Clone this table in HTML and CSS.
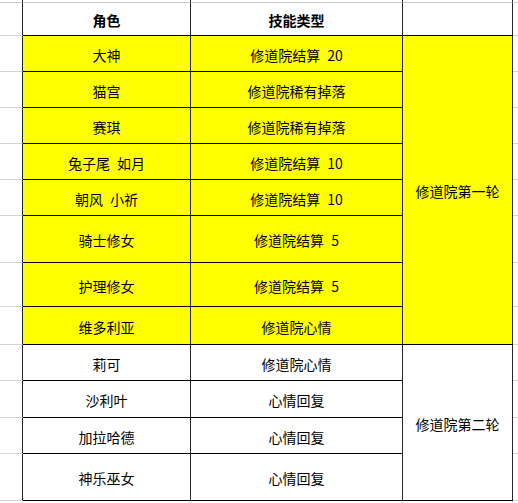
FILE: index.html
```html
<!DOCTYPE html>
<html lang="zh-CN">
<head>
<meta charset="utf-8">
<title>修道院技能</title>
<link rel="stylesheet" href="styles.css">
</head>
<body>
<div class="sheet">
  <!-- top strip -->
  <div class="cell gl top"></div>
  <div class="cell col top"></div>
  <div class="cell col top"></div>
  <div class="cell col top"></div>
  <div class="cell gr"></div>

  <!-- header -->
  <div class="cell gl"></div>
  <div class="cell col head">角色</div>
  <div class="cell col head">技能类型</div>
  <div class="cell col head"></div>
  <div class="cell gr"></div>

  <div class="cell gl"></div>
  <div class="cell col yellow">大神</div>
  <div class="cell col yellow">修道院结算 20</div>
  <div class="cell col yellow span8">修道院第一轮</div>
  <div class="cell gr"></div>

  <div class="cell gl"></div>
  <div class="cell col yellow">猫宫</div>
  <div class="cell col yellow">修道院稀有掉落</div>
  <div class="cell gr"></div>

  <div class="cell gl"></div>
  <div class="cell col yellow">赛琪</div>
  <div class="cell col yellow">修道院稀有掉落</div>
  <div class="cell gr"></div>

  <div class="cell gl"></div>
  <div class="cell col yellow">兔子尾 如月</div>
  <div class="cell col yellow">修道院结算 10</div>
  <div class="cell gr"></div>

  <div class="cell gl"></div>
  <div class="cell col yellow">朝风 小祈</div>
  <div class="cell col yellow">修道院结算 10</div>
  <div class="cell gr"></div>

  <div class="cell gl"></div>
  <div class="cell col yellow">骑士修女</div>
  <div class="cell col yellow">修道院结算 5</div>
  <div class="cell gr"></div>

  <div class="cell gl"></div>
  <div class="cell col yellow">护理修女</div>
  <div class="cell col yellow">修道院结算 5</div>
  <div class="cell gr"></div>

  <div class="cell gl"></div>
  <div class="cell col yellow">维多利亚</div>
  <div class="cell col yellow">修道院心情</div>
  <div class="cell gr"></div>

  <div class="cell gl"></div>
  <div class="cell col">莉可</div>
  <div class="cell col">修道院心情</div>
  <div class="cell col span4">修道院第二轮</div>
  <div class="cell gr"></div>

  <div class="cell gl"></div>
  <div class="cell col">沙利叶</div>
  <div class="cell col">心情回复</div>
  <div class="cell gr"></div>

  <div class="cell gl"></div>
  <div class="cell col">加拉哈德</div>
  <div class="cell col">心情回复</div>
  <div class="cell gr"></div>

  <div class="cell gl"></div>
  <div class="cell col">神乐巫女</div>
  <div class="cell col">心情回复</div>
  <div class="cell gr"></div>

  <!-- bottom strip -->
  <div class="cell gl bottom"></div>
  <div class="cell col bottom"></div>
  <div class="cell col bottom"></div>
  <div class="cell col bottom"></div>
  <div class="cell gr bottom"></div>
</div>
</body>
</html>
```
FILE: styles.css
```css
* {
  box-sizing: border-box;
}

html, body {
  margin: 0;
  padding: 0;
  background: #ffffff;
}

body {
  font-family: "Noto Sans CJK SC", "Noto Sans", sans-serif;
  font-size: 14px;
  color: #000000;
}

.sheet {
  display: grid;
  grid-template-columns: 23px 168px 212px 110px 5px;
  grid-template-rows: 3px 33px 36px 36px 36px 36px 36px 47px 44px 38px 36px 37px 36px 47px 3px;
  width: 518px;
  height: 503px;
  overflow: hidden;
}

.cell {
  display: flex;
  align-items: center;
  justify-content: center;
  white-space: pre;
  word-spacing: 4px;
  line-height: 1;
  padding-top: 2px;
}

.gl {
  border-right: 1px solid #262626;
  border-bottom: 1px solid #d4d4d4;
}

.gr {
  border-bottom: 1px solid #d4d4d4;
}

.col {
  border-right: 1px solid #262626;
  border-bottom: 1px solid #000000;
}

.col.top {
  border-bottom: 1px solid #c4c4c4;
}

.gl.top {
  border-bottom: 1px solid #c4c4c4;
}

.top {
  padding-top: 0;
}

.head {
  font-weight: bold;
  background: #ffffff;
  padding-top: 1px;
}

.yellow {
  background: #ffff00;
}

.span8 {
  grid-row: span 8;
}

.span4 {
  grid-row: span 4;
}

.bottom {
  border-bottom: none;
  padding-top: 0;
}

.gl.bottom,
.col.bottom {
  border-right: 1px solid #d4d4d4;
}
```
